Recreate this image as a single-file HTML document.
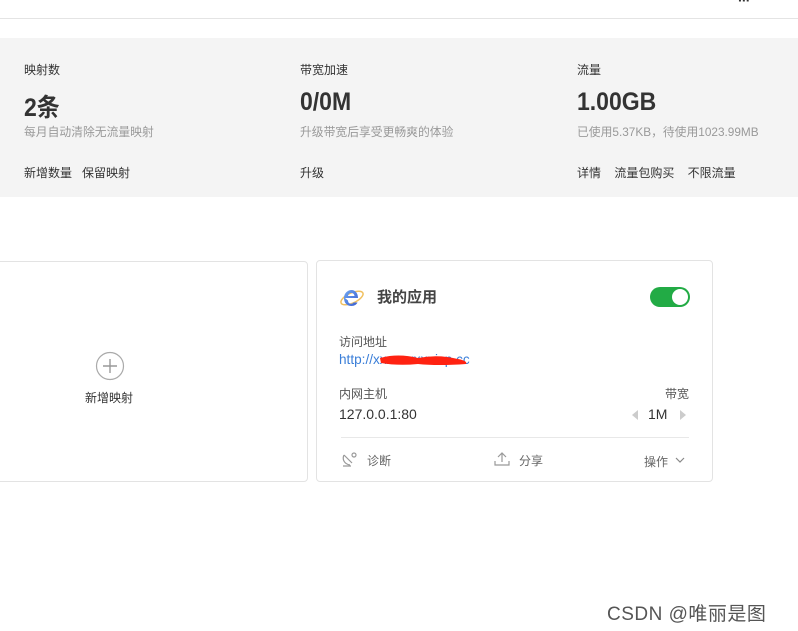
<!DOCTYPE html>
<html><head><meta charset="utf-8">
<style>
*{margin:0;padding:0;box-sizing:border-box}
body{width:798px;height:631px;background:#fff;font-family:"Liberation Sans","Noto Sans CJK SC",sans-serif;color:#333;position:relative;overflow:hidden}
.a{position:absolute;white-space:nowrap}
.line{position:absolute;left:0;top:18px;width:798px;height:1px;background:#e4e4e4}
.band{position:absolute;left:0;top:38px;width:798px;height:159px;background:#f4f4f4}
.lbl{font-size:12px;color:#333}
.big{font-size:25px;font-weight:bold;color:#333;transform:scaleX(.92);transform-origin:left}
.sub{font-size:11.8px;color:#999}
.lk{font-size:12px;color:#333}
.card{position:absolute;border:1px solid #e3e3e3;border-radius:4px;background:#fff}
</style></head><body>
<div class="a" style="left:738px;top:-8px;font-size:14px;font-weight:bold">∙∙∙</div>
<div class="line"></div>
<div class="band"></div>
<div class="a lbl" style="left:24px;top:61px">映射数</div>
<div class="a big" style="left:24px;top:88px">2条</div>
<div class="a sub" style="left:24px;top:123px">每月自动清除无流量映射</div>
<div class="a lk" style="left:24px;top:164px">新增数量&nbsp;&nbsp;&nbsp;保留映射</div>
<div class="a lbl" style="left:300px;top:61px">带宽加速</div>
<div class="a big" style="left:300px;top:88px">0/0M</div>
<div class="a sub" style="left:300px;top:123px">升级带宽后享受更畅爽的体验</div>
<div class="a lk" style="left:300px;top:164px">升级</div>
<div class="a lbl" style="left:577px;top:61px">流量</div>
<div class="a big" style="left:577px;top:88px">1.00GB</div>
<div class="a sub" style="left:577px;top:123px">已使用5.37KB，待使用1023.99MB</div>
<div class="a lk" style="left:577px;top:164px">详情&nbsp;&nbsp;&nbsp;&nbsp;流量包购买&nbsp;&nbsp;&nbsp;&nbsp;不限流量</div>

<div class="card" style="left:-5px;top:261px;width:313px;height:221px"></div>
<svg class="a" style="left:95px;top:351px" width="30" height="30"><circle cx="15" cy="15" r="13.5" fill="none" stroke="#aaa" stroke-width="1.2"/><path d="M15 8v14M8 15h14" stroke="#999" stroke-width="1.4"/></svg>
<div class="a" style="left:85px;top:389px;font-size:12px;color:#333">新增映射</div>

<div class="card" style="left:316px;top:260px;width:397px;height:222px"></div>
<svg class="a" style="left:339px;top:284px" width="26" height="26"><defs><linearGradient id="g" x1="0" y1="0" x2="1" y2="1"><stop offset="0" stop-color="#6fa6f0"/><stop offset="1" stop-color="#3a5fd0"/></linearGradient></defs><ellipse cx="13" cy="14" rx="12" ry="5" fill="none" stroke="#f0c060" stroke-width="1.5" transform="rotate(-25 13 14)"/><path d="M6 14h13c0-5-3-8-6.5-8S5 9 5 14s3 8 7.5 8c3 0 5-1.5 6-3.5h-4c-.6 1-1.3 1.3-2.3 1.3-2 0-3.2-1.5-3.2-3.3z M9 12c.3-2 1.7-3 3.300-3s3 1 3.2 3z" fill="url(#g)" fill-rule="evenodd"/></svg>
<div class="a" style="left:377px;top:286px;font-size:15px;font-weight:bold;color:#444">我的应用</div>
<div class="a" style="left:650px;top:287px;width:40px;height:20px;border-radius:10px;background:#22ab45"></div>
<div class="a" style="left:672px;top:289px;width:16px;height:16px;border-radius:8px;background:#fff"></div>
<div class="a" style="left:339px;top:333px;font-size:12px;color:#555">访问地址</div>
<div class="a" style="left:339px;top:352px;font-size:13.6px;color:#3a7ed8">http://xxxxxxxxuicp.cc</div>
<svg class="a" style="left:378px;top:350px" width="100" height="20"><path d="M2 8 Q20 3 40 8 Q60 4 80 9 Q90 11 88 14 Q60 16 40 14 Q20 16 3 13z" fill="#f21"/></svg>
<div class="a" style="left:339px;top:385px;font-size:12px;color:#555">内网主机</div>
<div class="a" style="left:665px;top:385px;font-size:12px;color:#555">带宽</div>
<div class="a" style="left:339px;top:406px;font-size:14px;color:#333">127.0.0.1:80</div>
<svg class="a" style="left:631px;top:409px" width="8" height="12"><path d="M7 1 1 6l6 5z" fill="#ccc"/></svg>
<div class="a" style="left:648px;top:406px;font-size:14px;color:#333">1M</div>
<svg class="a" style="left:679px;top:409px" width="8" height="12"><path d="M1 1l6 5-6 5z" fill="#ccc"/></svg>
<div class="a" style="left:341px;top:437px;width:348px;height:1px;background:#e8e8e8"></div>
<svg class="a" style="left:341px;top:451px" width="17" height="17" fill="none" stroke="#999" stroke-width="1.2"><path d="M3 4c-2 4 0 9 6 10M3 4l8 8M2 15h8"/><circle cx="13" cy="4" r="2"/></svg>
<div class="a" style="left:367px;top:452px;font-size:12px;color:#666">诊断</div>
<svg class="a" style="left:494px;top:451px" width="16" height="16" fill="none" stroke="#999" stroke-width="1.2"><path d="M8 11V2M4 6l4-4 4 4M1 10v4h14v-4"/></svg>
<div class="a" style="left:519px;top:452px;font-size:12px;color:#666">分享</div>
<div class="a" style="left:644px;top:453px;font-size:12px;color:#666">操作</div>
<svg class="a" style="left:675px;top:456px" width="10" height="8" fill="none" stroke="#888" stroke-width="1.2"><path d="M1 2l4 4 4-4"/></svg>

<div class="a" style="left:607px;top:599px;font-size:19px;color:#555;letter-spacing:.5px">CSDN @唯丽是图</div>
</body></html>
